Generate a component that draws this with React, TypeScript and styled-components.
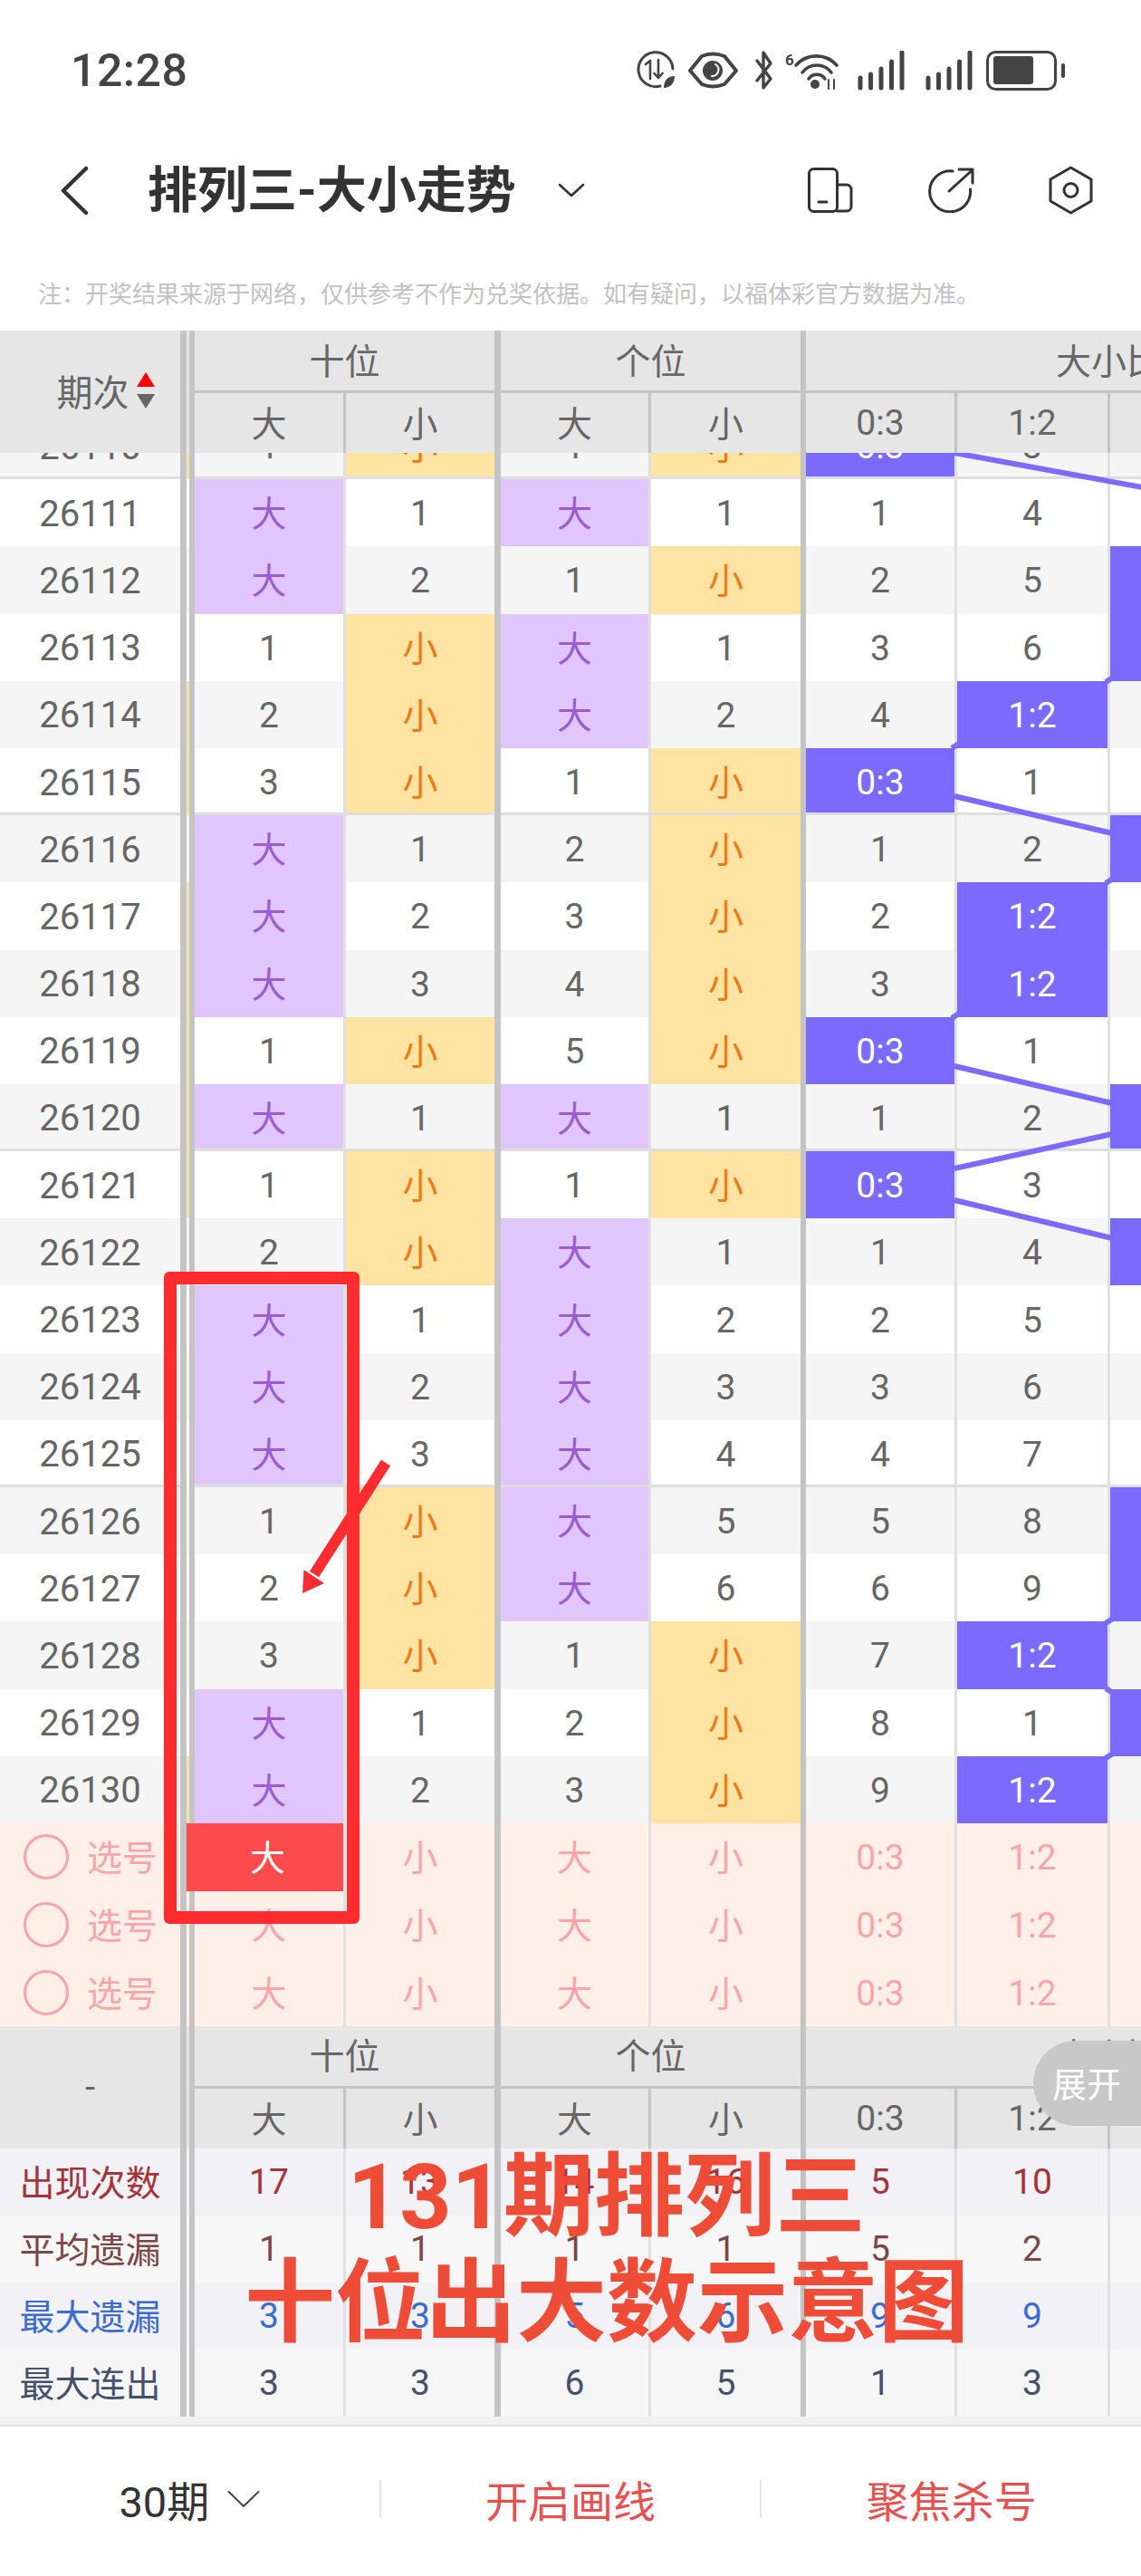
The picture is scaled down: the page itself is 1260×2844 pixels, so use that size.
import React from 'react';
import styled, { createGlobalStyle } from 'styled-components';

const Global = createGlobalStyle`
  html, body { margin: 0; padding: 0; background: #fff; }
  * { box-sizing: border-box; }
`;

const App0 = styled.div`
  position: relative;
  width: 1260px;
  height: 2844px;
  overflow: hidden;
  background: #fff;
  font-family: Roboto, "Noto Sans CJK SC", sans-serif;
  color: #666;
`;

/* ---------- top ---------- */
const StatusBar = styled.div`
  height: 156px;
  display: flex;
  align-items: center;
  justify-content: space-between;
  padding: 0 82px 0 78px;
`;
const Clock = styled.div`
  font-size: 50px;
  font-weight: 500;
  color: #444;
  letter-spacing: 0.5px;
`;
const Nav = styled.div`
  height: 108px;
  display: flex;
  align-items: center;
  padding: 0 53px 0 67px;
`;
const Title = styled.div`
  margin-left: 65px;
  font-size: 55px;
  line-height: 62px;
  font-weight: 700;
  color: #333;
  white-space: nowrap;
`;
const TitleCaret = styled.svg`
  margin-left: 46px;
`;
const NavIcons = styled.div`
  margin-left: auto;
  display: flex;
  align-items: center;
  gap: 82px;
`;
const Note = styled.div`
  height: 101px;
  padding: 21px 0 0 42px;
  font-size: 26px;
  line-height: 80px;
  color: #c2c2c2;
  white-space: nowrap;
`;

/* ---------- table ---------- */
const Table = styled.div`
  width: 1260px;
  overflow: hidden;
`;
const Band = styled.div`
  display: flex;
`;
const Corner = styled.div<{ $inset?: number }>`
  flex: none;
  width: 199px;
  height: 135px;
  background: #e6e6e6;
  display: flex;
  align-items: center;
  justify-content: center;
  padding-left: ${p => p.$inset ?? 0}px;
  font-size: 40px;
  color: #666;
  gap: 8px;
`;
const CornerLabel = styled.span`
  padding-bottom: 4px;
`;
const Freeze = styled.div<{ $bg: string }>`
  flex: none;
  width: 16px;
  background: ${p => p.$bg};
  border-left: 7px solid #c4c4c4;
  border-right: 6px solid #c4c4c4;
`;
const HeadStack = styled.div`
  display: flex;
  flex-direction: column;
  background: #e6e6e6;
`;
const HeadTop = styled.div`
  display: flex;
  height: 69px;
`;
const Group = styled.div<{ $w: number; $b: number }>`
  flex: none;
  width: ${p => p.$w}px;
  display: flex;
  align-items: center;
  justify-content: center;
  padding-bottom: 5px;
  border-right: ${p => p.$b}px solid #c4c4c4;
  border-bottom: 3px solid #c4c4c4;
  font-size: 39px;
  color: #666;
  white-space: nowrap;
`;
const HeadSub = styled.div`
  display: flex;
  height: 66px;
`;
const SortArrows = styled.div`
  display: flex;
  flex-direction: column;
  gap: 8px;
  padding-bottom: 4px;
`;
const Tri = styled.div<{ $up?: boolean }>`
  width: 0;
  height: 0;
  border-left: 10px solid transparent;
  border-right: 10px solid transparent;
  ${p => (p.$up ? 'border-bottom: 16px solid #ff0000;' : 'border-top: 16px solid #666;')}
`;

const Body = styled.div`
  position: relative;
  height: 1513px;
  overflow: hidden;
`;
const Scroll = styled.div`
  margin-top: -45px;
`;
const Row = styled.div<{ $h?: number }>`
  display: flex;
  height: ${p => p.$h ?? 74.2}px;
`;
const Issue = styled.div<{ $bg: string; $ruled?: boolean }>`
  flex: none;
  width: 199px;
  display: flex;
  align-items: center;
  justify-content: center;
  padding-top: 2px;
  background: ${p => p.$bg};
  font-size: 40px;
  color: #666;
  ${p => p.$ruled && 'box-shadow: inset 0 -3px 0 #dedede;'}
`;

type Tone = 'plain' | 'big' | 'small' | 'hit' | 'pick' | 'on' | 'head' | 'stat';
type Nudge = 'up' | 'down' | 'none';
const toneBg: Record<Tone, string> = {
  plain: 'transparent',
  big: '#e1c6fd',
  small: '#fee3a2',
  hit: '#7c6aff',
  pick: '#feefe9',
  on: '#fb4b4d',
  head: '#e6e6e6',
  stat: 'transparent',
};
const toneFg: Record<Tone, string> = {
  plain: '#666',
  big: '#9a5ccf',
  small: '#ee7a14',
  hit: '#fff',
  pick: '#fba5a8',
  on: '#fff',
  head: '#666',
  stat: 'inherit',
};
const Cell = styled.div<{
  $w: number;
  $b: number;
  $major: boolean;
  $tone: Tone;
  $ruled?: boolean;
  $line?: string;
  $bg?: string;
  $nudge?: Nudge;
}>`
  flex: none;
  width: ${p => p.$w}px;
  display: flex;
  align-items: center;
  justify-content: center;
  background-color: ${p => (p.$tone === 'plain' && p.$bg ? p.$bg : toneBg[p.$tone])};
  background-clip: padding-box;
  color: ${p => toneFg[p.$tone]};
  font-size: 39px;
  ${p => p.$nudge === 'up' && 'padding-bottom: 4px;'}
  ${p => p.$nudge === 'down' && 'padding-top: 2px;'}
  border-right: ${p => p.$b}px solid ${p => p.$line ?? (p.$major ? '#c4c4c4' : '#e0e0e0')};
  ${p => p.$ruled && 'box-shadow: inset 0 -3px 0 #dedede;'}
`;
const ActiveCell = styled(Cell)`
  position: relative;
  margin-left: -9px;
  width: ${p => p.$w + 9}px;
  padding-left: 6px;
`;
const Lines = styled.svg`
  position: absolute;
  left: 0;
  top: 0;
  pointer-events: none;
`;
const PickLabel = styled.div`
  flex: none;
  width: 199px;
  display: flex;
  align-items: center;
  background: #feefe9;
  padding-left: 26px;
  gap: 20px;
  font-size: 39px;
  color: #fba5a8;
`;
const PickText = styled.span`
  padding-bottom: 4px;
`;
const Ring = styled.div`
  width: 50px;
  height: 50px;
  border-radius: 50%;
  border: 3px solid #f9a5a8;
`;
const StatRowWrap = styled.div<{ $bg: string; $fg: string }>`
  display: flex;
  height: 74px;
  background: ${p => p.$bg};
  color: ${p => p.$fg};
`;
const StatLabel = styled.div`
  flex: none;
  width: 199px;
  display: flex;
  align-items: center;
  justify-content: center;
  padding-bottom: 4px;
  font-size: 39px;
  white-space: nowrap;
`;
const Strip = styled.div`
  height: 11px;
  background: #f1f1f4;
  border-bottom: 2px solid #dedede;
`;

/* ---------- footer ---------- */
const Footer = styled.div`
  height: 165px;
  display: flex;
  align-items: center;
  padding-bottom: 5px;
  font-size: 47px;
`;
const FootItem = styled.div<{ $red?: boolean }>`
  flex: 1;
  display: flex;
  align-items: center;
  justify-content: center;
  gap: 20px;
  color: ${p => (p.$red ? '#e8504f' : '#333')};
`;
const FootRule = styled.div`
  flex: none;
  width: 2px;
  height: 41px;
  background: #e4e4e4;
`;

/* ---------- overlays ---------- */
const RedFrame = styled.div`
  position: absolute;
  left: 181px;
  top: 1404px;
  width: 216px;
  height: 720px;
  border: 14px solid #fe2c2f;
  border-radius: 6px;
`;
const Scribble = styled.svg`
  position: absolute;
  left: 320px;
  top: 1600px;
`;
const Caption = styled.div`
  position: absolute;
  left: 170px;
  top: 2367px;
  width: 1000px;
  text-align: center;
  font-size: 100px;
  line-height: 117px;
  font-weight: 700;
  color: #ee4c37;
  white-space: nowrap;
`;
const Pill = styled.div`
  position: absolute;
  right: 0;
  top: 2253px;
  width: 119px;
  height: 94px;
  padding: 0 0 4px 21px;
  display: flex;
  align-items: center;
  border-radius: 47px 0 0 47px;
  background: #c8c8c8;
  color: #fff;
  font-size: 38px;
`;

/* ---------- data ---------- */
const NOTE_TEXT =
  '注\uFF1A开奖结果来源于网络\uFF0C仅供参考不作为兑奖依据。如有疑问\uFF0C以福体彩官方数据为准。';

const cols = [
  { w: 167, b: 3, major: false },
  { w: 171, b: 7, major: true },
  { w: 166, b: 3, major: false },
  { w: 171, b: 6, major: true },
  { w: 167, b: 3, major: false },
  { w: 169, b: 3, major: false },
  { w: 170, b: 3, major: false },
  { w: 170, b: 7, major: true },
];
const groups = [
  { w: 338, b: 7, t: '十位' },
  { w: 337, b: 6, t: '个位' },
  { w: 676, b: 7, t: '大小比' },
];
const heads = ['大', '小', '大', '小', '0:3', '1:2', '2:1', '3:0'];

const rows: { id: number; v: string; amber?: boolean }[] = [
  { id: 26110, v: '1 小 1 小 0:3 3 -', amber: true },
  { id: 26111, v: '大 1 大 1 1 4 -' },
  { id: 26112, v: '大 2 1 小 2 5 2:1' },
  { id: 26113, v: '1 小 大 1 3 6 2:1' },
  { id: 26114, v: '2 小 大 2 4 1:2 -', amber: true },
  { id: 26115, v: '3 小 1 小 0:3 1 -', amber: true },
  { id: 26116, v: '大 1 2 小 1 2 2:1' },
  { id: 26117, v: '大 2 3 小 2 1:2 -', amber: true },
  { id: 26118, v: '大 3 4 小 3 1:2 -', amber: true },
  { id: 26119, v: '1 小 5 小 0:3 1 -', amber: true },
  { id: 26120, v: '大 1 大 1 1 2 2:1', amber: true },
  { id: 26121, v: '1 小 1 小 0:3 3 -', amber: true },
  { id: 26122, v: '2 小 大 1 1 4 2:1' },
  { id: 26123, v: '大 1 大 2 2 5 -' },
  { id: 26124, v: '大 2 大 3 3 6 -' },
  { id: 26125, v: '大 3 大 4 4 7 -' },
  { id: 26126, v: '1 小 大 5 5 8 2:1' },
  { id: 26127, v: '2 小 大 6 6 9 2:1' },
  { id: 26128, v: '3 小 1 小 7 1:2 -' },
  { id: 26129, v: '大 1 2 小 8 1 2:1' },
  { id: 26130, v: '大 2 3 小 9 1:2 -', amber: true },
];

const stats = [
  { label: '出现次数', bg: '#f2f2f6', fg: '#a5343a', v: ['17', '13', '14', '16', '5', '10'] },
  { label: '平均遗漏', bg: '#f7f7f8', fg: '#7c4546', v: ['1', '1', '1', '1', '5', '2'] },
  { label: '最大遗漏', bg: '#f2f2f6', fg: '#3a6bd2', v: ['3', '3', '5', '6', '9', '9'] },
  { label: '最大连出', bg: '#f6f6f7', fg: '#45506f', v: ['3', '3', '6', '5', '1', '3'] },
];

const toneOf = (v: string): Tone => {
  if (v === '大') return 'big';
  if (v === '小') return 'small';
  if (v.includes(':')) return 'hit';
  return 'plain';
};
const nudgeOf = (v: string): Nudge => (v === '大' || v === '小' ? 'up' : 'down');

const trend: [number, number, number, number][] = [
  [1054, 500, 1300, 545],
  [1054, 879, 1228, 920],
  [1054, 1177, 1228, 1218],
  [1054, 1290, 1228, 1252],
  [1054, 1325, 1228, 1367],
  [1051, 826, 1059, 821],
  [1051, 1124, 1059, 1119],
  [1221, 753, 1229, 748],
  [1221, 975, 1229, 970],
  [1221, 1792, 1229, 1787],
  [1221, 1864, 1229, 1869],
  [1221, 1941, 1229, 1936],
];

/* ---------- drawings ---------- */
const StatusIcons = () => (
  <svg width="475" height="44" viewBox="703 56 475 44" fill="none" stroke="#444" strokeLinecap="round" strokeLinejoin="round">
    <path d="M729 95 A19 19 0 1 1 743 76" strokeWidth="3" />
    <path d="M713 71 L718 67 V87 M727 66 V86 M722.5 81 L727 86 L731.5 81" strokeWidth="2.6" />
    <path d="M733 97 C733 88 738 84 745 84 C745 92 740 97 733 97 Z" fill="#444" stroke="none" />
    <path d="M762 78 L775 62 Q787 57 800 62 L813 78 L800 93 Q787 98 775 93 Z" strokeWidth="4" />
    <circle cx="787" cy="78" r="11" fill="#444" stroke="none" />
    <path d="M790 71 A7 7 0 0 1 786 84" stroke="#fff" strokeWidth="2" />
    <path d="M836 67 L851 87 L843 97 V58 L851 70 L836 89" strokeWidth="3.4" />
    <text x="867" y="72" fontFamily="Roboto, sans-serif" fontSize="17" fontWeight="700" fill="#444" stroke="none">6</text>
    <path d="M879 72 A30 30 0 0 1 924 72 M886 80 A20 20 0 0 1 918 80 M893 87 A11 11 0 0 1 911 87" strokeWidth="3.6" />
    <circle cx="900" cy="93" r="5" fill="#444" stroke="none" />
    <path d="M915 88 V98 M921 88 V98" strokeWidth="2" />
    {[0, 75].map(dx => (
      <g key={dx} strokeWidth="5">
        {[86, 82, 76, 68, 58].map((y, i) => (
          <path key={y} d={`M${950 + dx + i * 11.5} ${y} V97`} />
        ))}
      </g>
    ))}
    <rect x="1090.5" y="57.5" width="75" height="41" rx="9" strokeWidth="3" />
    <rect x="1097" y="62" width="44" height="31" rx="3" fill="#444" stroke="none" />
    <rect x="1172" y="70" width="4" height="16" rx="2" fill="#444" stroke="none" />
  </svg>
);

const DeviceIcon = () => (
  <svg width="50" height="50" viewBox="0 0 50 50" fill="none" stroke="#333" strokeWidth="3" strokeLinecap="round">
    <rect x="1.5" y="1.5" width="31" height="47" rx="5" />
    <path d="M32.5 19 H43 a5 5 0 0 1 5 5 V43 a5 5 0 0 1 -5 5 H32.5 M12 38 H21" />
  </svg>
);
const ShareIcon = () => (
  <svg width="52" height="50" viewBox="0 0 52 50" fill="none" stroke="#333" strokeWidth="3" strokeLinecap="round" strokeLinejoin="round">
    <path d="M28 4 A22.5 22.5 0 1 0 47.5 24" />
    <path d="M24 26 L49.5 3 M35 2 H50 V17" />
  </svg>
);
const HexIcon = () => (
  <svg width="49" height="54" viewBox="0 0 49 54" fill="none" stroke="#333" strokeWidth="3" strokeLinejoin="round">
    <path d="M24.5 2 L47 15 V39 L24.5 52 L2 39 V15 Z" />
    <circle cx="24.5" cy="27" r="7.5" />
  </svg>
);

const HeadBlock = ({ left, inset }: { left: React.ReactNode; inset?: number }) => (
  <Band>
    <Corner $inset={inset}>{left}</Corner>
    <Freeze $bg="#e6e6e6" />
    <HeadStack>
      <HeadTop>
        {groups.map(g => (
          <Group key={g.t} $w={g.w} $b={g.b}>{g.t}</Group>
        ))}
      </HeadTop>
      <HeadSub>
        {heads.map((h, i) => (
          <Cell
            key={i}
            $w={cols[i].w}
            $b={cols[i].b}
            $major={cols[i].major}
            $tone="head"
            $line="#c4c4c4"
            $nudge={nudgeOf(h) === 'up' ? 'up' : 'none'}
          >
            {h}
          </Cell>
        ))}
      </HeadSub>
    </HeadStack>
  </Band>
);

export default function App() {
  return (
    <App0>
      <Global />
      <StatusBar>
        <Clock>12:28</Clock>
        <StatusIcons />
      </StatusBar>
      <Nav>
        <svg width="31" height="55" viewBox="0 0 31 55" fill="none" stroke="#333" strokeWidth="4.5" strokeLinecap="round" strokeLinejoin="round">
          <path d="M28 3 L3 27.5 L28 52" />
        </svg>
        <Title>排列三-大小走势</Title>
        <TitleCaret width="30" height="16" viewBox="0 0 30 16" fill="none" stroke="#333" strokeWidth="2.6" strokeLinecap="round" strokeLinejoin="round">
          <path d="M2 2 L15 14 L28 2" />
        </TitleCaret>
        <NavIcons>
          <DeviceIcon />
          <ShareIcon />
          <HexIcon />
        </NavIcons>
      </Nav>
      <Note>{NOTE_TEXT}</Note>

      <Table>
        <HeadBlock
          inset={34}
          left={
            <>
              <CornerLabel>期次</CornerLabel>
              <SortArrows>
                <Tri $up />
                <Tri />
              </SortArrows>
            </>
          }
        />
        <Body>
          <Scroll>
            {rows.map((r, ri) => {
              const bg = ri % 2 === 0 ? '#f5f5f5' : '#fff';
              const ruled = (r.id - 26110) % 5 === 0 && r.id !== 26130;
              const vals = r.v.split(' ');
              return (
                <Row key={r.id}>
                  <Issue $bg={bg} $ruled={ruled}>{r.id}</Issue>
                  <Freeze $bg={r.amber ? '#f7e2b0' : bg} />
                  {cols.map((c, i) => {
                    const raw = vals[i] ?? '-';
                    const val = raw === '-' ? '' : raw;
                    return (
                      <Cell
                        key={i}
                        $bg={bg}
                        $w={c.w}
                        $b={c.b}
                        $major={c.major}
                        $tone={val ? toneOf(val) : 'plain'}
                        $ruled={ruled}
                        $nudge={nudgeOf(val)}
                      >
                        {val}
                      </Cell>
                    );
                  })}
                </Row>
              );
            })}
          </Scroll>
          <Lines width="1260" height="1513" viewBox="0 500 1260 1513">
            {trend.map((l, i) => (
              <line key={i} x1={l[0]} y1={l[1]} x2={l[2]} y2={l[3]} stroke="#7c6aff" strokeWidth="6" />
            ))}
          </Lines>
        </Body>

        {[0, 1, 2].map(n => (
          <Row key={n} $h={74.67}>
            <PickLabel>
              <Ring />
              <PickText>选号</PickText>
            </PickLabel>
            <Freeze $bg="#feefe9" />
            {cols.map((c, i) =>
              n === 0 && i === 0 ? (
                <ActiveCell key={i} $w={c.w} $b={c.b} $major={c.major} $tone="on" $line="#e0e0e0" $nudge="up">{heads[i]}</ActiveCell>
              ) : (
                <Cell key={i} $w={c.w} $b={c.b} $major={c.major} $tone="pick" $nudge={nudgeOf(heads[i])}>{heads[i]}</Cell>
              )
            )}
          </Row>
        ))}

        <HeadBlock left="-" />

        {stats.map(s => (
          <StatRowWrap key={s.label} $bg={s.bg} $fg={s.fg}>
            <StatLabel>{s.label}</StatLabel>
            <Freeze $bg={s.bg} />
            {cols.map((c, i) => (
              <Cell key={i} $w={c.w} $b={c.b} $major={c.major} $tone="stat">{s.v[i] ?? ''}</Cell>
            ))}
          </StatRowWrap>
        ))}
        <Strip />
      </Table>

      <Footer>
        <FootItem>
          <span>30期</span>
          <svg width="36" height="20" viewBox="0 0 36 20" fill="none" stroke="#444" strokeWidth="2" strokeLinecap="round" strokeLinejoin="round">
            <path d="M1.5 2 L18 18 L34.5 2" />
          </svg>
        </FootItem>
        <FootRule />
        <FootItem $red>开启画线</FootItem>
        <FootRule />
        <FootItem $red>聚焦杀号</FootItem>
      </Footer>

      <RedFrame />
      <Scribble width="120" height="170" viewBox="320 1600 120 170" fill="none">
        <path d="M426 1615 L347 1738" stroke="#fe2c2f" strokeWidth="12" />
        <path d="M334 1759 L335.5 1733 L358 1748 Z" fill="#fe2c2f" />
      </Scribble>
      <Caption>
        131期排列三
        <br />
        十位出大数示意图
      </Caption>
      <Pill>展开</Pill>
    </App0>
  );
}
